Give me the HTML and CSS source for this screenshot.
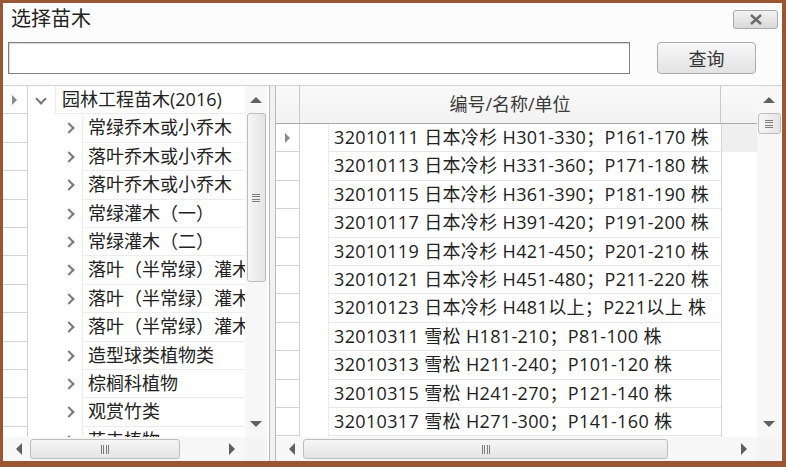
FILE: index.html
```html
<!DOCTYPE html>
<html lang="zh-CN">
<head>
    <meta charset="UTF-8">
    <title>选择苗木</title>
    <link rel="stylesheet" href="styles.css">
</head>
<body>
<div class="dialog">
    <div class="title-bar">
        <span class="title">选择苗木</span>
        <button class="close-button">
            <svg width="14" height="11" viewBox="0 0 14 11"><path d="M2 1 L12 10 M12 1 L2 10" stroke="#6a6a6a" stroke-width="2.4" fill="none"/></svg>
        </button>
    </div>

    <div class="search-row">
        <input class="search-input" type="text">
        <button class="query-button">查询</button>
    </div>

    <div class="panels">
        <!-- Tree of categories -->
        <div class="tree-panel">
            <div class="rows">
                <div class="row"><div class="rh current"></div><span class="exp down"></span><div class="node top">园林工程苗木(2016)</div></div>
                <div class="row"><div class="rh"></div><span class="indent"></span><span class="exp"></span><div class="node">常绿乔木或小乔木</div></div>
                <div class="row"><div class="rh"></div><span class="indent"></span><span class="exp"></span><div class="node">落叶乔木或小乔木</div></div>
                <div class="row"><div class="rh"></div><span class="indent"></span><span class="exp"></span><div class="node">落叶乔木或小乔木</div></div>
                <div class="row"><div class="rh"></div><span class="indent"></span><span class="exp"></span><div class="node">常绿灌木（一）</div></div>
                <div class="row"><div class="rh"></div><span class="indent"></span><span class="exp"></span><div class="node">常绿灌木（二）</div></div>
                <div class="row"><div class="rh"></div><span class="indent"></span><span class="exp"></span><div class="node">落叶（半常绿）灌木</div></div>
                <div class="row"><div class="rh"></div><span class="indent"></span><span class="exp"></span><div class="node">落叶（半常绿）灌木</div></div>
                <div class="row"><div class="rh"></div><span class="indent"></span><span class="exp"></span><div class="node">落叶（半常绿）灌木</div></div>
                <div class="row"><div class="rh"></div><span class="indent"></span><span class="exp"></span><div class="node">造型球类植物类</div></div>
                <div class="row"><div class="rh"></div><span class="indent"></span><span class="exp"></span><div class="node">棕榈科植物</div></div>
                <div class="row"><div class="rh"></div><span class="indent"></span><span class="exp"></span><div class="node">观赏竹类</div></div>
                <div class="row"><div class="rh"></div><span class="indent"></span><span class="exp"></span><div class="node">花卉植物</div></div>
            </div>
            <div class="vscroll">
                <span class="arrow up"></span>
                <div class="vthumb long"><span class="grip-h"></span></div>
                <span class="arrow down"></span>
            </div>
            <div class="hscroll">
                <span class="arrow left"></span>
                <div class="hthumb short"><span class="grip-v"></span></div>
                <span class="arrow right"></span>
            </div>
            <div class="corner"></div>
        </div>

        <div class="splitter"></div>

        <!-- Item grid -->
        <div class="grid-panel">
            <div class="rows">
                <div class="head">
                    <div class="rh"></div>
                    <div class="head-cell">编号/名称/单位</div>
                    <div class="filler"></div>
                </div>
                <div class="row"><div class="rh current"></div><span class="gap"></span><div class="cell">32010111 日本冷杉 H301-330；P161-170 株</div><div class="filler selected"></div></div>
                <div class="row"><div class="rh"></div><span class="gap"></span><div class="cell">32010113 日本冷杉 H331-360；P171-180 株</div><div class="filler"></div></div>
                <div class="row"><div class="rh"></div><span class="gap"></span><div class="cell">32010115 日本冷杉 H361-390；P181-190 株</div><div class="filler"></div></div>
                <div class="row"><div class="rh"></div><span class="gap"></span><div class="cell">32010117 日本冷杉 H391-420；P191-200 株</div><div class="filler"></div></div>
                <div class="row"><div class="rh"></div><span class="gap"></span><div class="cell">32010119 日本冷杉 H421-450；P201-210 株</div><div class="filler"></div></div>
                <div class="row"><div class="rh"></div><span class="gap"></span><div class="cell">32010121 日本冷杉 H451-480；P211-220 株</div><div class="filler"></div></div>
                <div class="row"><div class="rh"></div><span class="gap"></span><div class="cell">32010123 日本冷杉 H481以上；P221以上 株</div><div class="filler"></div></div>
                <div class="row"><div class="rh"></div><span class="gap"></span><div class="cell">32010311 雪松 H181-210；P81-100 株</div><div class="filler"></div></div>
                <div class="row"><div class="rh"></div><span class="gap"></span><div class="cell">32010313 雪松 H211-240；P101-120 株</div><div class="filler"></div></div>
                <div class="row"><div class="rh"></div><span class="gap"></span><div class="cell">32010315 雪松 H241-270；P121-140 株</div><div class="filler"></div></div>
                <div class="row"><div class="rh"></div><span class="gap"></span><div class="cell">32010317 雪松 H271-300；P141-160 株</div><div class="filler"></div></div>
                <div class="row"><div class="rh"></div><span class="gap"></span><div class="cell">32010319 雪松 H301-330；P161-180 株</div><div class="filler"></div></div>
            </div>
            <div class="vscroll">
                <span class="arrow up"></span>
                <div class="vthumb small"><span class="grip-h"></span></div>
                <span class="arrow down"></span>
            </div>
            <div class="hscroll">
                <span class="arrow left"></span>
                <div class="hthumb wide"><span class="grip-v"></span></div>
                <span class="arrow right"></span>
            </div>
            <div class="corner"></div>
        </div>
    </div>
</div>
</body>
</html>
```

FILE: styles.css
```css
* { box-sizing: border-box; }
body {
    margin: 0;
    font-family: "Open Sans", "Noto Sans CJK SC", sans-serif;
    color: #222;
}
.dialog {
    width: 786px;
    height: 467px;
    border: 3px solid #9a5633;
    border-right-width: 4px;
    border-bottom-width: 6px;
    background: #fcfcfc;
    display: flex;
    flex-direction: column;
}
.title-bar {
    height: 32px;
    display: flex;
    justify-content: space-between;
    align-items: center;
    padding-left: 8px;
}
.title {
    font-size: 20px;
    line-height: 1;
}
.close-button {
    width: 45px;
    height: 19px;
    margin-right: 4px;
    padding: 0;
    border: 1px solid #a9a9a9;
    border-radius: 3px;
    background: linear-gradient(#f3f3f3, #d9d9d9);
    display: flex;
    align-items: center;
    justify-content: center;
}
.search-row {
    display: flex;
    align-items: flex-start;
    height: 39px;
    padding: 7px 0 0 5px;
}
.search-input {
    width: 622px;
    height: 32px;
    margin: 0;
    border: 1px solid #7f7f7f;
    box-shadow: inset 1px 1px 1px #d8d8d8;
    background: #fff;
}
.query-button {
    width: 99px;
    height: 32px;
    margin-left: 27px;
    border: 1px solid #adadad;
    border-radius: 4px;
    background: linear-gradient(#f7f7f7, #e3e3e3);
    font-family: inherit;
    font-size: 18px;
    color: #333;
    padding: 0;
}
.panels {
    flex: 1;
    margin-top: 11px;
    display: flex;
    border-top: 1px solid #d2d2d2;
    min-height: 0;
}
.tree-panel {
    width: 267px;
    border-right: 1px solid #b9b9b9;
    padding-right: 2px;
    display: grid;
    grid-template-columns: 242px 22px;
    grid-template-rows: 1fr 24px;
    background: #fff;
}
.splitter {
    width: 5px;
    background: #f1f1f1;
}
.grid-panel {
    flex: 1;
    border-left: 1px solid #b9b9b9;
    padding-right: 1px;
    display: grid;
    grid-template-columns: 481px 24px;
    grid-template-rows: 1fr 24px;
    background: #fff;
}
.rows {
    overflow: hidden;
    min-height: 0;
}
.row {
    display: flex;
    height: 28.4px;
    font-size: 18px;
    line-height: 27px;
    white-space: nowrap;
}
.rh {
    width: 25px;
    flex: none;
    border-right: 1px solid #d3d3d3;
    border-bottom: 1px solid #d3d3d3;
    background: #fff;
    position: relative;
}
.grid-panel .rh { width: 24px; }
.rh.current::after {
    content: "";
    position: absolute;
    left: 9px;
    top: 50%;
    margin-top: -5px;
    border-left: 5px solid #8a8a8a;
    border-top: 5px solid transparent;
    border-bottom: 5px solid transparent;
}

/* tree nodes */
.indent { width: 27px; flex: none; }
.exp {
    width: 27px;
    flex: none;
    position: relative;
}
.exp::after {
    content: "";
    position: absolute;
    left: 10px;
    top: 10px;
    width: 6px;
    height: 6px;
    border-right: 2px solid #7a7a7a;
    border-top: 2px solid #7a7a7a;
    transform: rotate(45deg);
}
.exp.down::after {
    left: 9px;
    top: 9px;
    border-top: none;
    border-bottom: 2px solid #7a7a7a;
}
.node {
    flex: 1;
    min-width: 0;
    overflow: hidden;
    padding-left: 5px;
    border-left: 1px solid #ececec;
    border-bottom: 1px solid #ececec;
}
.node.top { padding-left: 6px; }

/* grid cells */
.head {
    display: flex;
    height: 38px;
    border-bottom: 1px solid #a9a9a9;
    background: linear-gradient(#fafafa, #f2f2f2);
    font-size: 18px;
    line-height: 37px;
    color: #3a3a3a;
}
.head .rh {
    background: transparent;
    border-bottom: none;
    border-right-color: #c9c9c9;
}
.head-cell {
    width: 421px;
    text-align: center;
    border-right: 1px solid #c9c9c9;
}
.head .filler { flex: 1; }
.gap { width: 28px; flex: none; }
.cell {
    width: 393px;
    flex: none;
    overflow: hidden;
    padding-left: 5px;
    letter-spacing: 0.35px;
    border-left: 1px solid #ececec;
    border-bottom: 1px solid #e6e6e6;
}
.row .filler {
    flex: 1;
    border-left: 1px solid #d6d6d6;
}
.filler.selected { background: #efefef; }

/* scrollbars */
.vscroll, .hscroll {
    background: #f7f7f7;
    position: relative;
}
.vscroll {
    display: flex;
    flex-direction: column;
    align-items: center;
}
.hscroll {
    display: flex;
    align-items: center;
}
.corner { background: #f4f4f4; }
.arrow { flex: none; position: relative; }
.vscroll .arrow { width: 100%; height: 27px; }
.hscroll .arrow { width: 27px; height: 100%; }
.arrow::after {
    content: "";
    position: absolute;
    left: 50%;
    top: 50%;
}
.arrow.up::after {
    margin: -3px 0 0 -6px;
    border-left: 6px solid transparent;
    border-right: 6px solid transparent;
    border-bottom: 6px solid #606060;
}
.arrow.down::after {
    margin: -3px 0 0 -6px;
    border-left: 6px solid transparent;
    border-right: 6px solid transparent;
    border-top: 6px solid #606060;
}
.arrow.left::after {
    margin: -6px 0 0 -1px;
    border-top: 6px solid transparent;
    border-bottom: 6px solid transparent;
    border-right: 6px solid #606060;
}
.arrow.right::after {
    margin: -6px 0 0 -3px;
    border-top: 6px solid transparent;
    border-bottom: 6px solid transparent;
    border-left: 6px solid #606060;
}
.vthumb, .hthumb {
    border: 1px solid #bdbdbd;
    border-radius: 3px;
    display: flex;
    align-items: center;
    justify-content: center;
}
.vthumb {
    width: 19px;
    background: linear-gradient(to right, #f6f6f6, #e4e4e4);
}
.vthumb.long { height: 169px; }
.vthumb.small { width: 23px; height: 21px; margin-bottom: auto; }
.vscroll .arrow.down { margin-top: auto; }
.tree-panel .vthumb { margin-bottom: auto; }
.hthumb {
    height: 20px;
    background: linear-gradient(#f6f6f6, #e4e4e4);
}
.hthumb.short { width: 150px; }
.hthumb.wide { width: 365px; }
.hscroll .arrow.right { margin-left: auto; }
.grip-h {
    width: 8px;
    height: 8px;
    background: repeating-linear-gradient(#7d7d7d 0 1px, transparent 1px 2.4px);
}
.grip-v {
    width: 8px;
    height: 9px;
    background: repeating-linear-gradient(to right, #7d7d7d 0 1px, transparent 1px 2.4px);
}
```
